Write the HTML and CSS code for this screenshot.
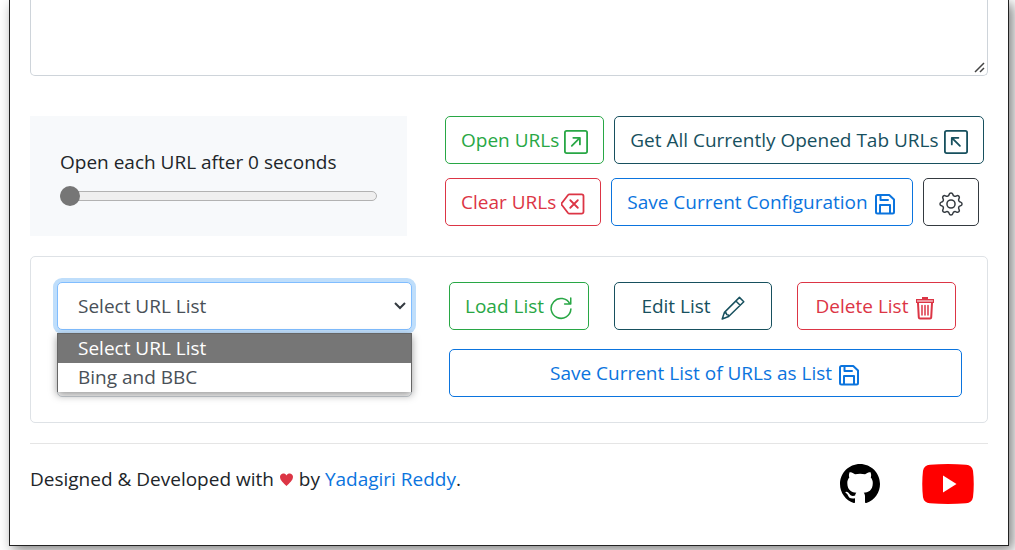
FILE: index.html
```html
<!DOCTYPE html>
<html lang="en">
<head>
    <meta charset="utf-8">
    <title>Open Multiple URLs</title>
    <link rel="stylesheet" href="styles.css">
</head>
<body>
    <div class="popup">
        <textarea class="url-box" id="urls" aria-label="URLs"></textarea>

        <div class="controls">
            <div class="delay">
                <label for="delay">Open each URL after 0 seconds</label>
                <input type="range" id="delay" min="0" max="60" value="0">
            </div>
            <div class="actions">
                <div class="btn-row">
                    <button class="btn green">Open URLs
                        <svg class="icon square" viewBox="0 0 16 16"><rect x=".6" y=".6" width="14.8" height="14.8" rx="1.2"/><path d="M5.2 10.6l5-5M6.2 5.2h4.400v4.400"/></svg>
                    </button>
                    <button class="btn teal">Get All Currently Opened Tab URLs
                        <svg class="icon square" viewBox="0 0 16 16"><rect x=".6" y=".6" width="14.8" height="14.8" rx="1.2"/><path d="M10.600 10.600l-5-5M9.600 5.200H5.200v4.400"/></svg>
                    </button>
                </div>
                <div class="btn-row">
                    <button class="btn red">Clear URLs
                        <svg class="icon square" viewBox="0 0 16 16"><path d="M5.6 1.6h8.2a1.2 1.2 0 0 1 1.2 1.2v10.4a1.2 1.2 0 0 1-1.2 1.2H5.6a1.2 1.2 0 0 1-.9-.4L.6 8.7a1 1 0 0 1 0-1.4L4.7 2a1.2 1.2 0 0 1 .9-.4zM6.200 5.500l5 5M11.200 5.500l-5 5"/></svg>
                    </button>
                    <button class="btn blue">Save Current Configuration
                        <svg class="icon bold" viewBox="0 0 24 24"><path d="M4.5 3h11.7L21 7.500V20a1.5 1.5 0 0 1-1.5 1.5h-15A1.5 1.500 0 0 1 3 20V4.500A1.500 1.500 0 0 1 4.500 3zM7.500 3.500V8H15M7 21v-8h10v8"/></svg>
                    </button>
                    <button class="btn dark" aria-label="Settings">
                        <svg class="icon" viewBox="0 0 16 16"><circle cx="8" cy="8" r="2.7"/><path d="M6.8 1.5c.35-1.2 2.05-1.2 2.4 0l.1.34a1.46 1.46 0 0 0 2.1.87l.31-.17c1.1-.6 2.3.6 1.7 1.7l-.17.31a1.46 1.46 0 0 0 .87 2.1l.34.1c1.2.35 1.2 2.05 0 2.4l-.34.1a1.46 1.46 0 0 0-.87 2.1l.17.31c.6 1.1-.6 2.3-1.7 1.7l-.31-.17a1.46 1.46 0 0 0-2.1.87l-.1.34c-.35 1.2-2.05 1.2-2.4 0l-.1-.34a1.46 1.46 0 0 0-2.1-.87l-.31.17c-1.1.6-2.3-.6-1.7-1.7l.17-.31a1.46 1.46 0 0 0-.87-2.1l-.34-.1c-1.2-.35-1.2-2.05 0-2.4l.34-.1a1.46 1.46 0 0 0 .87-2.1l-.17-.31c-.6-1.1.6-2.3 1.7-1.7l.31.17a1.46 1.46 0 0 0 2.1-.87z"/></svg>
                    </button>
                </div>
            </div>
        </div>

        <div class="lists">
            <div class="list-fields">
                <div class="dropdown">
                    <select class="field focused" aria-label="URL list">
                        <option>Select URL List</option>
                        <option>Bing and BBC</option>
                    </select>
                    <ul class="menu">
                        <li class="selected">Select URL List</li>
                        <li>Bing and BBC</li>
                    </ul>
                </div>
                <input class="field" type="text" aria-label="List name">
            </div>
            <div class="list-actions">
                <button class="btn green">Load List
                    <svg class="icon" viewBox="0 0 16 16"><path d="M13.9 5.3A6.6 6.6 0 1 0 14.6 8.6M14.5 1.3v4.1h-4.1"/></svg>
                </button>
                <button class="btn teal wide">Edit List
                    <svg class="icon" viewBox="0 0 16 16"><path d="M12.3.9l2.9 2.9L5.1 13.7.8 15.3l1.5-4.4zM9.9 3.3l2.9 2.9M2.3 10.9l1.2.4.3 1.1 1.1.3.2 1"/></svg>
                </button>
                <button class="btn red delete">Delete List
                    <svg class="icon" viewBox="0 0 24 24"><path class="solid" d="M9 1h6v2h6v4H3V3h6z"/><path class="lid" d="M4.5 5h15"/><path class="can" d="M5 7l.8 14.5a1.2 1.2 0 0 0 1.2 1.1h10a1.2 1.2 0 0 0 1.2-1.1L19 7"/><path class="bars" d="M9 9.500v9.500M12 9.500v9.500M15 9.500v9.500"/></svg>
                </button>
                <button class="btn blue save">Save Current List of URLs as List
                    <svg class="icon bold" viewBox="0 0 24 24"><path d="M4.5 3h11.7L21 7.500V20a1.5 1.5 0 0 1-1.5 1.5h-15A1.5 1.500 0 0 1 3 20V4.500A1.500 1.500 0 0 1 4.500 3zM7.500 3.500V8H15M7 21v-8h10v8"/></svg>
                </button>
            </div>
        </div>

        <footer class="footer">
            <p>Designed &amp; Developed with
                <svg class="heart" viewBox="0 0 12 12"><path d="M6 12C3.5 9.5 0 7 0 3.5 0 0 4.5-.8 6 2.2 7.5-.8 12 0 12 3.5 12 7 8.5 9.5 6 12z"/></svg>
                by <a href="#">Yadagiri Reddy</a>.</p>
            <div class="social">
                <a href="#" aria-label="GitHub">
                    <svg class="github" viewBox="0 0 16 16"><path d="M8 0C3.58 0 0 3.58 0 8c0 3.54 2.29 6.53 5.47 7.59.4.07.55-.17.55-.38 0-.19-.01-.82-.01-1.49-2.01.37-2.53-.49-2.69-.94-.09-.23-.48-.94-.82-1.13-.28-.15-.68-.52-.01-.53.63-.01 1.08.58 1.23.82.72 1.21 1.87.87 2.33.66.07-.52.28-.87.51-1.07-1.78-.2-3.64-.89-3.64-3.95 0-.87.31-1.59.82-2.15-.08-.2-.36-1.02.08-2.12 0 0 .67-.21 2.2.82.64-.18 1.32-.27 2-.27s1.36.09 2 .27c1.53-1.04 2.2-.82 2.2-.82.44 1.1.16 1.92.08 2.12.51.56.82 1.27.82 2.15 0 3.07-1.87 3.75-3.65 3.95.29.25.54.73.54 1.48 0 1.07-.01 1.93-.01 2.2 0 .21.15.46.55.38A8.01 8.01 0 0 0 16 8c0-4.42-3.58-8-8-8z"/></svg>
                </a>
                <a href="#" aria-label="YouTube">
                    <svg class="youtube" viewBox="0 0 52 40"><path fill="#f00" d="M8 .8Q26-.8 44 .8q6 .5 7 6 1.5 13 0 26.4-1 5.5-7 6-18 1.6-36 0-6-.5-7-6-1.5-13.4 0-26.4 1-5.5 7-6z"/><path fill="#fff" d="M21 11.5v17L34.5 20z"/></svg>
                </a>
            </div>
        </footer>
    </div>
</body>
</html>
```
FILE: styles.css
```css
* {
    box-sizing: border-box;
}

body {
    margin: 0;
    font-family: "Open Sans", "Noto Sans", sans-serif;
    font-size: 19px;
    line-height: 30px;
    color: #212529;
    background-color: #fff;
    overflow: hidden;
}

/* Extension popup window */
.popup {
    margin: 0 6px 20px 9px;
    padding: 0 20px 41px;
    border: 1px solid #222;
    border-top: 0;
    background-color: #fff;
    box-shadow: 4px 4px 12px rgba(0, 0, 0, 0.5);
}

.url-box {
    display: block;
    width: 100%;
    height: 76px;
    padding: 10px 20px;
    border: 1px solid #ced4da;
    border-top: 0;
    border-radius: 0 0 5px 5px;
    font: inherit;
    resize: vertical;
}

.url-box::-webkit-resizer {
    background: url("data:image/svg+xml,%3Csvg xmlns='http://www.w3.org/2000/svg' width='15' height='15'%3E%3Cpath d='M3 12l9-9M8 12l4-4' stroke='%23444' stroke-width='1.5'/%3E%3C/svg%3E") no-repeat right bottom;
}

.controls {
    display: grid;
    grid-template-columns: 377fr 543fr;
    gap: 38px;
    margin-top: 40px;
}

.delay {
    padding: 30px;
    background-color: #f7f9fb;
}

.delay label {
    display: block;
    line-height: 32px;
}

.delay input {
    display: block;
    width: 100%;
    height: 20px;
    margin: 8px 0 0;
    appearance: none;
    background: none;
}

.delay input::-webkit-slider-runnable-track {
    height: 10px;
    border: 1px solid #b2b2b2;
    border-radius: 5px;
    background-color: #efefef;
}

.delay input::-webkit-slider-thumb {
    appearance: none;
    width: 20px;
    height: 20px;
    margin-top: -6px;
    margin-left: -1px;
    border-radius: 50%;
    background-color: #767676;
}

.actions {
    display: flex;
    flex-direction: column;
    gap: 14px;
}

.btn-row {
    display: flex;
    gap: 10px;
}

/* Buttons */
.btn {
    display: flex;
    align-items: center;
    justify-content: center;
    gap: 5px;
    height: 48px;
    padding: 0 15px;
    border: 1px solid currentColor;
    border-radius: 5px;
    background-color: #fff;
    font: inherit;
    white-space: nowrap;
    cursor: pointer;
}

.green {
    color: #28a745;
}

.teal {
    color: #17505e;
}

.red {
    color: #dc3545;
}

.blue {
    color: #0b74de;
}

.dark {
    color: #343a40;
}

.icon {
    flex: none;
    width: 24px;
    height: 24px;
    margin-top: 4px;
    fill: none;
    stroke: currentColor;
    stroke-width: 1;
    stroke-linecap: round;
    stroke-linejoin: round;
}

.icon.square {
    stroke-width: 1.2;
}

.icon.bold {
    stroke-width: 2;
}

.icon .solid {
    fill: currentColor;
    stroke: none;
}

.icon .lid {
    stroke: #fff;
}

.icon .can {
    stroke-width: 2;
}

.icon .bars {
    stroke-width: 1.5;
}

/* Saved lists */
.lists {
    display: grid;
    grid-template-columns: 355fr 513fr;
    gap: 37px;
    margin-top: 20px;
    padding: 25px 25px 25px 26px;
    border: 1px solid #dee2e6;
    border-radius: 5px;
}

.list-fields {
    display: flex;
    flex-direction: column;
    gap: 19px;
}

.dropdown {
    position: relative;
}

.field {
    display: block;
    width: 100%;
    height: 48px;
    padding: 0 20px;
    border: 1px solid #ced4da;
    border-radius: 5px;
    background-color: #fff;
    color: #495057;
    font: inherit;
}

.field.focused {
    appearance: none;
    border-color: #80bdff;
    background: #fff url("data:image/svg+xml,%3Csvg xmlns='http://www.w3.org/2000/svg' width='12' height='8'%3E%3Cpath d='M1 1l5 5 5-5' fill='none' stroke='%23343a40' stroke-width='2'/%3E%3C/svg%3E") no-repeat right 5px center;
    box-shadow: 0 0 0 4px #bfdefb;
}

.menu {
    position: absolute;
    top: 51px;
    left: 0;
    right: 0;
    margin: 0;
    padding: 0;
    border: 1px solid #666;
    border-bottom: 0;
    background-color: #fff;
    box-shadow: 0 3px 8px rgba(0, 0, 0, 0.4);
    list-style: none;
    line-height: 29px;
    color: #495057;
}

.menu li {
    padding: 0 20px;
}

.menu .selected {
    background-color: #767676;
    color: #fff;
}

.list-actions {
    display: grid;
    grid-template-columns: 139fr 158fr 165fr;
    column-gap: 25px;
    row-gap: 19px;
}

.list-actions .wide {
    gap: 10px;
}

.list-actions .delete {
    margin-right: 6px;
}

.list-actions .save {
    grid-column: 1 / -1;
}

/* Footer */
.footer {
    display: flex;
    justify-content: space-between;
    margin-top: 20px;
    padding-top: 20px;
    border-top: 1px solid #e5e5e5;
}

.footer p {
    margin: 0;
}

.footer a {
    color: #0b74de;
    text-decoration: none;
}

.heart {
    width: 13px;
    height: 13px;
    margin: 0 1px;
    fill: #dc3545;
}

.social {
    display: flex;
    gap: 42px;
    padding-right: 14px;
}

.social svg {
    display: block;
    height: 40px;
}

.github {
    width: 40px;
    fill: #000;
}

.youtube {
    width: 52px;
}
```
